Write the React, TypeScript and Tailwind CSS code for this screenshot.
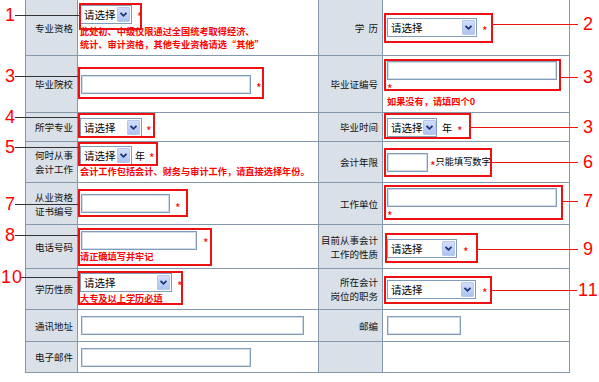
import type { ReactNode } from 'react';

const LABEL =
  'flex items-center justify-end bg-[#d9e0e8] pr-[4px] text-right text-[9.5px] leading-[14px] text-[#111]';
const VALUE_L = 'flex items-center bg-white pl-[2px]';
const VALUE_R = 'flex items-center bg-white pl-[4px]';
const HINT = 'whitespace-nowrap text-[9.2px] font-bold leading-[13px] text-[#f00]';

function Select({ className }: { className: string }) {
  return (
    <div className={`flex h-[19px] shrink-0 items-center border border-[#7f9db9] bg-white ${className}`}>
      <span className="flex-1 whitespace-nowrap pl-[3px] text-[10.5px] leading-[15px] text-black">请选择</span>
      <span className="mr-px flex h-[15px] w-[13px] shrink-0 items-center justify-center rounded-[1px] border border-[#b6c8ee] bg-gradient-to-b from-[#d2defc] to-[#aec3f2]">
        <svg width="9" height="7" viewBox="0 0 9 7">
          <path d="M1.5 1.8 L4.5 4.8 L7.5 1.8" fill="none" stroke="#1d3476" strokeWidth="1.8" />
        </svg>
      </span>
    </div>
  );
}

function Input({ className }: { className: string }) {
  return (
    <div
      className={`h-[19px] shrink-0 border border-[#7f9db9] bg-white shadow-[inset_0_0_0_1px_#d3dde9] ${className}`}
    />
  );
}

function Star({ className = '' }: { className?: string }) {
  return <span className={`text-[12px] leading-[9px] text-[#f00] ${className}`}>*</span>;
}

function Box({ className }: { className: string }) {
  return <div className={`pointer-events-none absolute border-2 border-[#ee1111] ${className}`} />;
}

function Line({ className }: { className: string }) {
  return <div className={`absolute h-px ${className}`} />;
}

function Num({ className, children }: { className: string; children: ReactNode }) {
  return (
    <span
      className={`absolute font-['Liberation_Sans',Arial,sans-serif] text-[18px] leading-[18px] text-[#f00] ${className}`}
    >
      {children}
    </span>
  );
}

export default function App() {
  return (
    <div className="relative h-[382px] w-[599px] overflow-hidden bg-white font-['Noto_Sans_CJK_SC','Noto_Sans',sans-serif]">
      <div className="ml-[25px] grid w-[545px] grid-cols-[51px_240px_63px_186px] grid-rows-[55px_56px_28px_40px_41px_43px_40px_31px_30px] gap-px border-x border-b border-[#8597ab] bg-[#8597ab]">
        {/* row 1 */}
        <div className={LABEL}>专业资格</div>
        <div className={`${VALUE_L} flex-col items-start justify-center`}>
          <div className="flex items-center">
            <Select className="w-[52px]" />
            <Star className="ml-[5px] mt-[5px]" />
          </div>
          <p className={`${HINT} mt-px`}>
            此处初、中级仅限通过全国统考取得经济、
            <br />
            统计、审计资格，其他专业资格请选“其他”
          </p>
        </div>
        <div className={LABEL}>学&nbsp;&nbsp;历</div>
        <div className={VALUE_R}>
          <Select className="w-[90px]" />
          <Star className="ml-[5px] mt-[6px]" />
        </div>

        {/* row 2 */}
        <div className={LABEL}>毕业院校</div>
        <div className={VALUE_L}>
          <Input className="ml-px w-[170px]" />
          <Star className="ml-[5px] mt-[6px]" />
        </div>
        <div className={LABEL}>毕业证编号</div>
        <div className={`${VALUE_R} flex-col items-start justify-start pt-[5px]`}>
          <Input className="w-[170px]" />
          <Star className="mt-[4px]" />
          <p className={`${HINT} mt-[2px]`}>如果没有，请填四个0</p>
        </div>

        {/* row 3 */}
        <div className={LABEL}>所学专业</div>
        <div className={VALUE_L}>
          <Select className="w-[62px]" />
          <Star className="ml-[4px] mt-[6px]" />
        </div>
        <div className={LABEL}>毕业时间</div>
        <div className={VALUE_R}>
          <Select className="w-[50px]" />
          <span className="ml-[5px] text-[10px] text-black">年</span>
          <Star className="ml-[5px] mt-[6px]" />
        </div>

        {/* row 4 */}
        <div className={LABEL}>
          何时从事
          <br />
          会计工作
        </div>
        <div className={`${VALUE_L} flex-col items-start justify-center`}>
          <div className="flex items-center">
            <Select className="w-[52px]" />
            <span className="ml-[3px] text-[10px] leading-[15px] text-black">年</span>
            <Star className="ml-[4px] mt-[3px]" />
          </div>
          <p className={HINT}>会计工作包括会计、财务与审计工作，请直接选择年份。</p>
        </div>
        <div className={LABEL}>会计年限</div>
        <div className={VALUE_R}>
          <Input className="w-[41px]" />
          <Star className="ml-[2px] mt-[6px]" />
          <span className="text-[9.2px] text-black">只能填写数字</span>
        </div>

        {/* row 5 */}
        <div className={LABEL}>
          从业资格
          <br />
          证书编号
        </div>
        <div className={VALUE_L}>
          <Input className="ml-px h-[18px] w-[89px]" />
          <Star className="ml-[5px] mt-[8px]" />
        </div>
        <div className={LABEL}>工作单位</div>
        <div className={`${VALUE_R} flex-col items-start justify-start pt-[5px]`}>
          <Input className="h-[19px] w-[170px]" />
          <Star className="mt-[4px]" />
        </div>

        {/* row 6 */}
        <div className={LABEL}>电话号码</div>
        <div className={`${VALUE_L} flex-col items-start justify-center`}>
          <div className="flex items-center">
            <Input className="ml-px w-[116px]" />
            <Star className="ml-[6px] mt-[4px]" />
          </div>
          <p className={HINT}>请正确填写并牢记</p>
        </div>
        <div className={LABEL}>
          目前从事会计
          <br />
          工作的性质
        </div>
        <div className={VALUE_R}>
          <Select className="mt-[3px] w-[70px]" />
          <Star className="ml-[6px] mt-[9px]" />
        </div>

        {/* row 7 */}
        <div className={LABEL}>学历性质</div>
        <div className={`${VALUE_L} flex-col items-start justify-center`}>
          <div className="flex items-center">
            <Select className="w-[92px]" />
            <Star className="ml-[5px] mt-[5px]" />
          </div>
          <p className={HINT}>大专及以上学历必填</p>
        </div>
        <div className={LABEL}>
          所在会计
          <br />
          岗位的职务
        </div>
        <div className={VALUE_R}>
          <Select className="w-[89px]" />
          <Star className="ml-[6px] mt-[6px]" />
        </div>

        {/* row 8 */}
        <div className={LABEL}>通讯地址</div>
        <div className={VALUE_L}>
          <Input className="ml-px w-[223px]" />
        </div>
        <div className={LABEL}>邮编</div>
        <div className={VALUE_R}>
          <Input className="w-[74px]" />
        </div>

        {/* row 9 */}
        <div className={LABEL}>电子邮件</div>
        <div className={VALUE_L}>
          <Input className="ml-px w-[170px]" />
        </div>
        <div className={LABEL} />
        <div className="bg-white" />
      </div>

      {/* annotation boxes */}
      <Box className="left-[79px] top-[3px] h-[27px] w-[63px]" />
      <Box className="left-[384px] top-[13px] h-[30px] w-[109px]" />
      <Box className="left-[78px] top-[67px] h-[32px] w-[186px]" />
      <Box className="left-[384px] top-[59px] h-[32px] w-[177px]" />
      <Box className="left-[78px] top-[113px] h-[25px] w-[77px]" />
      <Box className="left-[384px] top-[113px] h-[26px] w-[87px]" />
      <Box className="left-[78px] top-[142px] h-[24px] w-[80px]" />
      <Box className="left-[384px] top-[148px] h-[29px] w-[108px]" />
      <Box className="left-[78px] top-[189px] h-[28px] w-[110px]" />
      <Box className="left-[384px] top-[185px] h-[35px] w-[179px]" />
      <Box className="left-[78px] top-[228px] h-[38px] w-[134px]" />
      <Box className="left-[385px] top-[233px] h-[30px] w-[93px]" />
      <Box className="left-[78px] top-[271px] h-[34px] w-[105px]" />
      <Box className="left-[384px] top-[276px] h-[28px] w-[108px]" />

      {/* leader lines, left */}
      <Line className="left-[15px] top-[15px] w-[64px] bg-[#333]" />
      <Line className="left-[15px] top-[76px] w-[63px] bg-[#333]" />
      <Line className="left-[15px] top-[117px] w-[63px] bg-[#333]" />
      <Line className="left-[15px] top-[147px] w-[63px] bg-[#333]" />
      <Line className="left-[15px] top-[204px] w-[63px] bg-[#333]" />
      <Line className="left-[15px] top-[235px] w-[63px] bg-[#333]" />
      <Line className="left-[20px] top-[277px] w-[58px] bg-[#333]" />

      {/* leader lines, right */}
      <Line className="left-[493px] top-[24px] w-[85px] bg-[#ee1111]" />
      <Line className="left-[561px] top-[77px] w-[17px] bg-[#ee1111]" />
      <Line className="left-[471px] top-[127px] w-[107px] bg-[#ee1111]" />
      <Line className="left-[492px] top-[162px] w-[86px] bg-[#ee1111]" />
      <Line className="left-[563px] top-[201px] w-[15px] bg-[#ee1111]" />
      <Line className="left-[478px] top-[249px] w-[100px] bg-[#ee1111]" />
      <Line className="left-[492px] top-[290px] w-[85px] bg-[#ee1111]" />

      {/* numbers */}
      <Num className="left-[5px] top-[6px]">1</Num>
      <Num className="left-[5px] top-[67px]">3</Num>
      <Num className="left-[5px] top-[108px]">4</Num>
      <Num className="left-[5px] top-[138px]">5</Num>
      <Num className="left-[5px] top-[195px]">7</Num>
      <Num className="left-[5px] top-[226px]">8</Num>
      <Num className="left-[1px] top-[268px] tracking-[1px]">10</Num>
      <Num className="left-[583px] top-[15px]">2</Num>
      <Num className="left-[583px] top-[68px]">3</Num>
      <Num className="left-[583px] top-[118px]">3</Num>
      <Num className="left-[583px] top-[153px]">6</Num>
      <Num className="left-[583px] top-[192px]">7</Num>
      <Num className="left-[583px] top-[240px]">9</Num>
      <Num className="left-[578px] top-[281px] tracking-[1px]">11</Num>
    </div>
  );
}
